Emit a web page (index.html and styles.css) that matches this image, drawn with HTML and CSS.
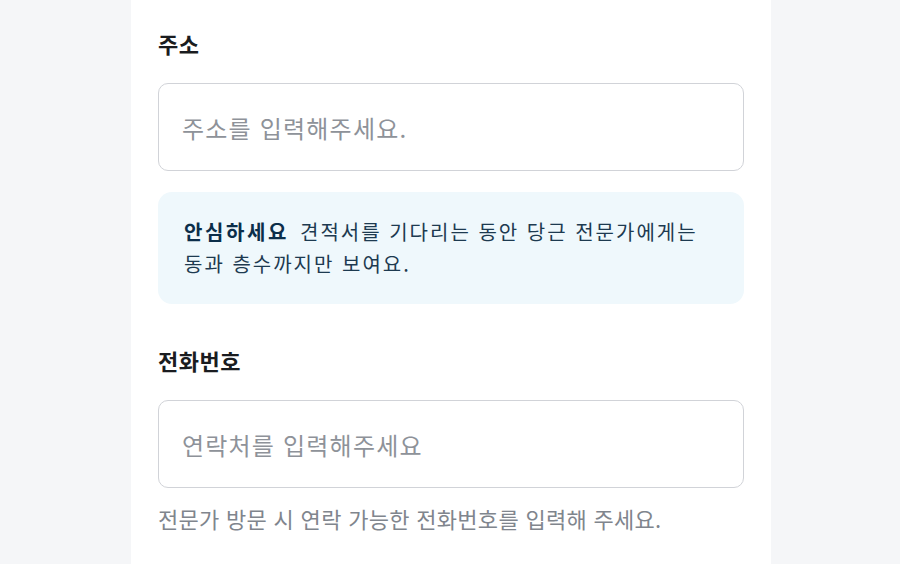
FILE: index.html
```html
<!DOCTYPE html>
<html lang="ko">
<head>
  <meta charset="UTF-8" />
  <meta name="viewport" content="width=device-width, initial-scale=1.0" />
  <title>주소 및 연락처 입력</title>
  <link rel="stylesheet" href="styles.css">
</head>
<body>
  <div class="sheet">
    <div class="field">
      <label for="address">주소</label>
      <input id="address" type="text" placeholder="주소를 입력해주세요." />
    </div>

    <div class="notice">
      <strong>안심하세요</strong>견적서를 기다리는 동안 당근 전문가에게는 동과 층수까지만 보여요.
    </div>

    <div class="field field-phone">
      <label for="phone">전화번호</label>
      <input id="phone" type="tel" placeholder="연락처를 입력해주세요" />
      <p class="hint">전문가 방문 시 연락 가능한 전화번호를 입력해 주세요.</p>
    </div>
  </div>
</body>
</html>
```

FILE: styles.css
```css
body {
  margin: 0;
  padding-left: 2px;
  background: #f5f6f8;
  font-family: "Noto Sans CJK KR", "Noto Sans", sans-serif;
  color: #1a1c20;
}
.sheet {
  width: 640px;
  min-height: 564px;
  margin: 0 auto;
  padding: 28px 27px 0;
  box-sizing: border-box;
  background: #fff;
}
.field label {
  display: block;
  font-size: 22px;
  line-height: 30px;
  font-weight: 700;
  letter-spacing: 0.5px;
  margin-bottom: 25px;
}
.field input {
  display: block;
  width: 100%;
  height: 88px;
  box-sizing: border-box;
  padding: 0 23px;
  border: 1px solid #d1d3d8;
  border-radius: 10px;
  font-family: inherit;
  font-size: 24px;
  letter-spacing: 1.2px;
  color: #1a1c20;
  outline: none;
}
.field input::placeholder {
  color: #8e9299;
}
.notice {
  margin-top: 21px;
  padding: 24px 26px;
  background: #eff8fc;
  border-radius: 14px;
  font-size: 20px;
  line-height: 32px;
  letter-spacing: 2px;
  word-break: keep-all;
  color: #1d3a50;
}
.notice strong {
  color: #0b2e4a;
  font-weight: 700;
  letter-spacing: 2.6px;
  margin-right: 11px;
}
.field-phone {
  margin-top: 41px;
}
.hint {
  margin: 15px 0 0;
  font-size: 22px;
  line-height: 30px;
  letter-spacing: 0.3px;
  color: #80858d;
}
```
